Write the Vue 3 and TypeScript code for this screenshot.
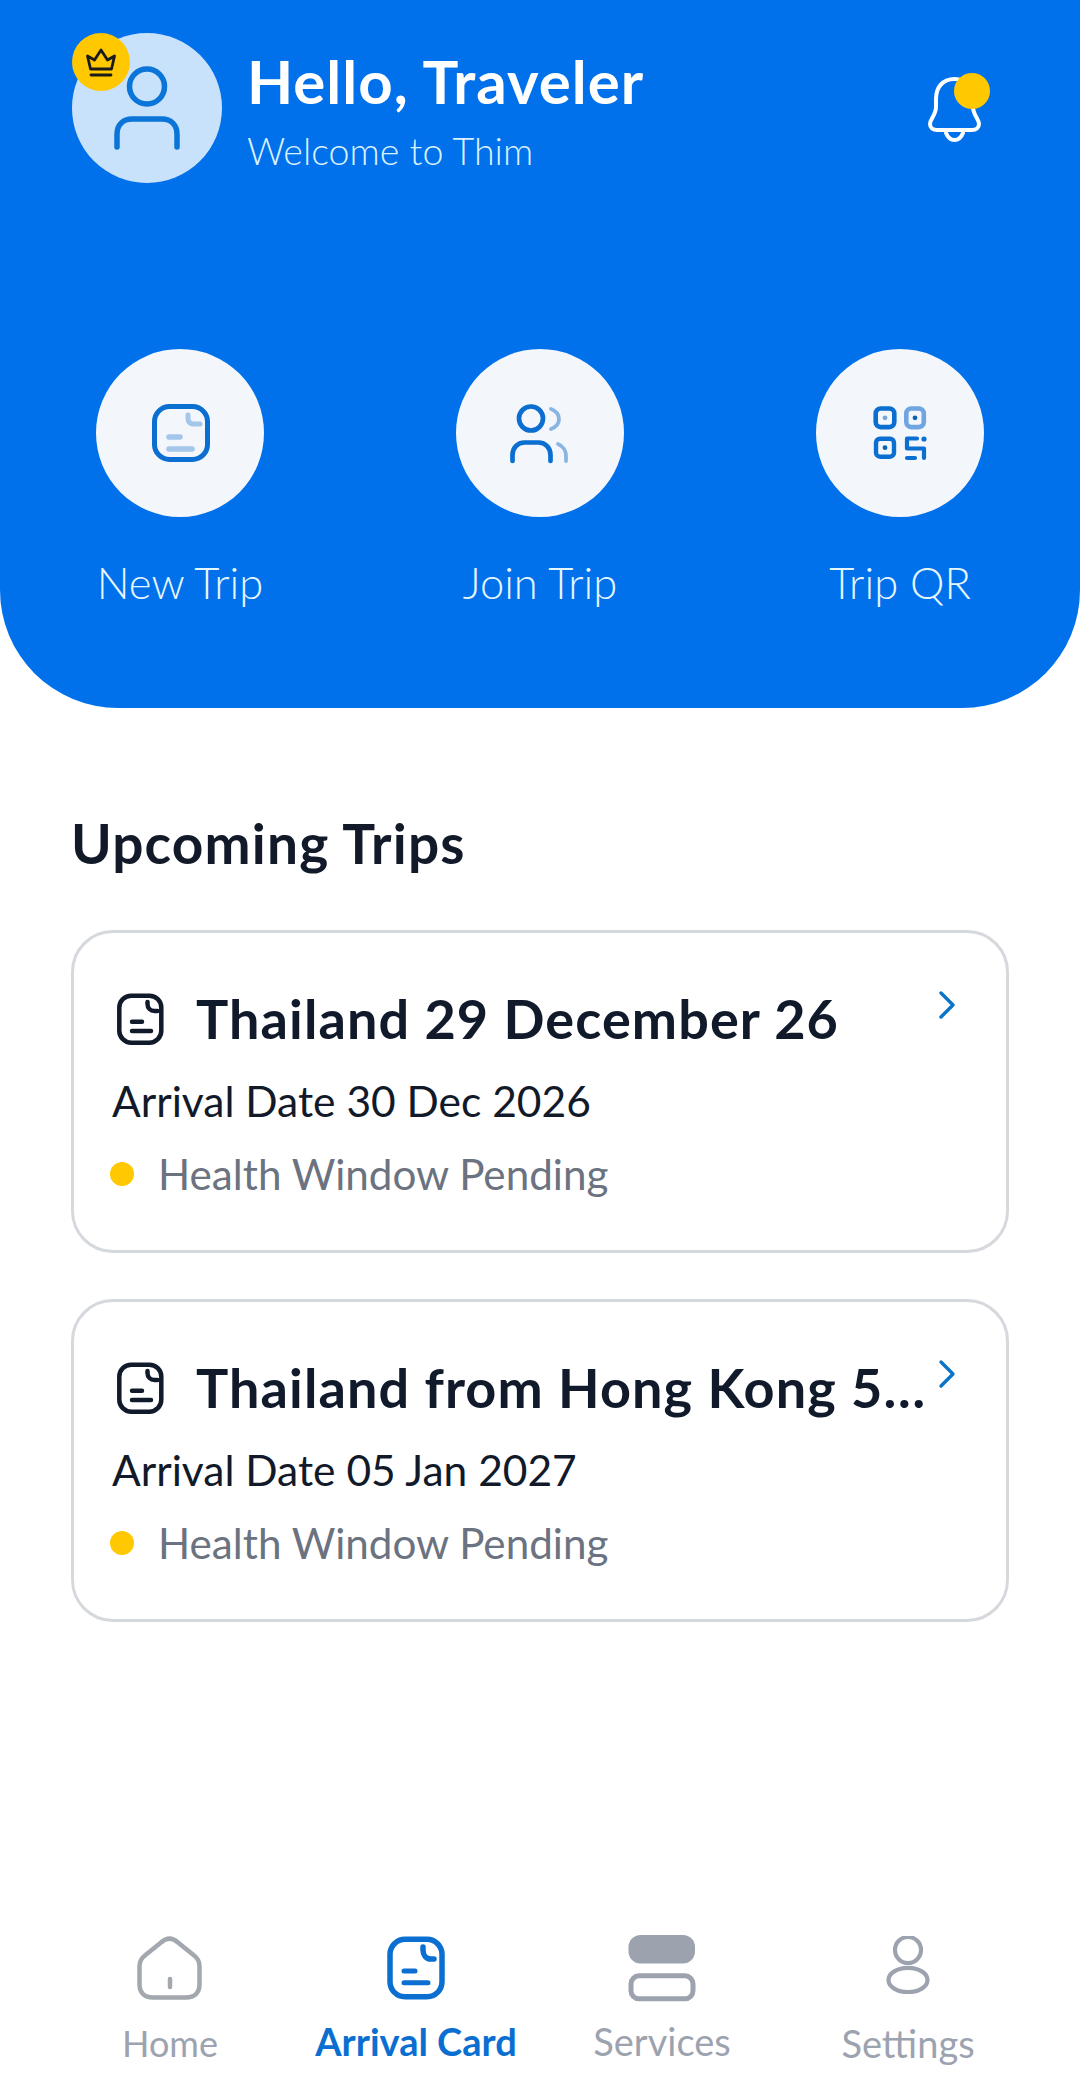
<script setup lang="ts">
interface Trip {
  title: string;
  arrival: string;
}

const actions = ["New Trip", "Join Trip", "Trip QR"];

const trips: Trip[] = [
  { title: "Thailand 29 December 26", arrival: "Arrival Date 30 Dec 2026" },
  { title: "Thailand from Hong Kong 5 January 27", arrival: "Arrival Date 05 Jan 2027" },
];
</script>

<template>
  <div class="page">
    <header class="hero">
      <div class="top">
        <div class="avatar">
          <svg width="66" height="84" viewBox="0 0 66 84" fill="none" stroke="#0a74d8" stroke-width="5.5" stroke-linecap="round">
            <circle cx="33" cy="20.5" r="17.5" />
            <path d="M3 81V68c0-9 6-15 15-15h30c9 0 15 6 15 15v13" />
          </svg>
          <span class="crown">
            <svg width="34" height="34" viewBox="0 0 34 34" fill="none" stroke="#1b1b1b" stroke-width="2.8" stroke-linejoin="round" stroke-linecap="round">
              <path d="M6.5 24 3.5 11l7 4L17 5l6.5 10 7-4-3 13z" />
              <path d="M7 30h20" />
            </svg>
          </span>
        </div>
        <div class="hello">
          <h1>Hello, Traveler</h1>
          <p>Welcome to Thim</p>
        </div>
        <div class="bell">
          <svg width="53" height="65" viewBox="0 0 53 65" fill="none" stroke="#fff" stroke-width="4" stroke-linecap="round" stroke-linejoin="round">
            <path d="M26.5 2C14 2 8 11 8 22v8c0 8-6 12-6 17 0 4 3 6 7 6h35c4 0 7-2 7-6 0-5-6-9-6-17v-8C45 11 39 2 26.5 2z" />
            <path d="M18 56c2 5 5 7 8.5 7s6.5-2 8.5-7" />
          </svg>
          <span class="bell-dot"></span>
        </div>
      </div>

      <div class="actions">
        <div v-for="(a, i) in actions" :key="a" class="action">
          <div class="action-circle">
            <svg v-if="i === 0" width="60" height="58" viewBox="-2 0 60 58" fill="none" stroke-linecap="round" stroke-width="5">
              <rect x="2.5" y="2.5" width="53" height="53" rx="15" stroke="#0a6fd0" />
              <path d="M36 11v3c0 4 2 6 6 6h6" stroke="#a3c6ea" />
              <path d="M17 33h11M17 45h23" stroke="#a3c6ea" stroke-width="5.5" />
            </svg>
            <svg v-else-if="i === 1" width="64" height="64" viewBox="0 0 64 64" fill="none" stroke-linecap="round" stroke-width="4.7">
              <circle cx="23" cy="17.5" r="12" stroke="#0a6fd0" />
              <path d="M4.5 60v-6c0-7 5-12.5 12-12.5h14c7 0 12 5.5 12 12.5v6" stroke="#0a6fd0" />
              <path d="M43 8c5 2 8 6 8 10s-3 8-8 10" stroke="#8ab5e3" stroke-width="3.8" />
              <path d="M50 43c5 2 8 7 8 12v5" stroke="#8ab5e3" stroke-width="3.8" />
            </svg>
            <svg v-else width="58" height="58" viewBox="0 0 58 58" fill="none" stroke-linecap="round" stroke-linejoin="round" stroke-width="4.6">
              <rect x="4.7" y="4.5" width="18.6" height="18.6" rx="5" stroke="#0a6fd0" />
              <circle cx="14" cy="13.8" r="2.4" fill="#7aa6d5" />
              <rect x="35.3" y="4.5" width="17.5" height="18.6" rx="5" stroke="#6fa5e0" />
              <circle cx="44" cy="13.8" r="2.4" fill="#0a62b0" />
              <rect x="5" y="34.7" width="18" height="18" rx="4" stroke="#0a6fd0" stroke-width="4.4" />
              <circle cx="14" cy="43.7" r="2.4" fill="#0a62b0" />
              <path d="M46 34.5H36v10h17V54M36 54h8" stroke="#0a6fd0" stroke-width="4.2" />
              <circle cx="53" cy="35" r="2.6" fill="#0a6fd0" />
            </svg>
          </div>
          <span class="action-label">{{ a }}</span>
        </div>
      </div>
    </header>

    <main class="content">
      <h2>Upcoming Trips</h2>
      <article v-for="t in trips" :key="t.title" class="card">
        <div class="card-head">
          <svg class="doc" width="48" height="52" viewBox="0 0 48 52" fill="none" stroke="#101a2b" stroke-width="4.5" stroke-linecap="round">
            <rect x="3.3" y="2.7" width="42" height="47" rx="12" />
            <path d="M31.5 9v2c0 4 3 7 7 7h3" />
            <path d="M16 28.7h10M16 38h19" />
          </svg>
          <h3>{{ t.title }}</h3>
          <svg class="chev" width="20" height="30" viewBox="0 0 20 30" fill="none" stroke="#0a74c8" stroke-width="3.4" stroke-linecap="round" stroke-linejoin="round">
            <path d="M4 3l12 12L4 27" />
          </svg>
        </div>
        <p class="arrival">{{ t.arrival }}</p>
        <p class="status"><span class="dot"></span>Health Window Pending</p>
      </article>
    </main>

    <nav class="tabs">
      <div class="tab">
        <div class="tab-icon">
          <svg width="66" height="64" viewBox="0 0 66 64" fill="none" stroke="#a3a7ae" stroke-width="4.5" stroke-linecap="round" stroke-linejoin="round">
            <path d="M2.5 30c0-5 2-8 6-11L24 6.5c5.5-5 11.5-5 17 0L56.5 19c4 3 6 6 6 11v18c0 9-5 13.5-13.500 13.5H16C7.5 61.5 2.5 57 2.5 48z" />
            <path d="M33 43v8" />
          </svg>
        </div>
        <span>Home</span>
      </div>
      <div class="tab active">
        <div class="tab-icon">
          <svg width="58" height="64" viewBox="0 0 58 64" fill="none" stroke="#0a6fd0" stroke-width="5.5" stroke-linecap="round">
            <rect x="3" y="3.3" width="52" height="57.5" rx="15" />
            <path d="M36 11v3c0 5 3 9 8 9h3" />
            <path d="M17 35h11M17 46.7h24" stroke-width="5" />
          </svg>
        </div>
        <span>Arrival Card</span>
      </div>
      <div class="tab up">
        <div class="tab-icon">
          <svg class="stack" width="68" height="67" viewBox="0 0 68 67" fill="none">
            <rect x="0.5" y="0" width="66.5" height="28.5" rx="12" fill="#9ca3af" />
            <rect x="3" y="40.8" width="62" height="23" rx="8" stroke="#9ca3af" stroke-width="5" />
          </svg>
        </div>
        <span>Services</span>
      </div>
      <div class="tab">
        <div class="tab-icon">
          <svg width="44" height="58" viewBox="0 0 44 58" fill="none" stroke="#9ca3af" stroke-width="4.2">
            <circle cx="22" cy="14" r="13" />
            <ellipse cx="22" cy="44" rx="19.5" ry="12.2" />
          </svg>
        </div>
        <span>Settings</span>
      </div>
    </nav>
  </div>
</template>

<style scoped>
.page {
  width: 1080px;
  height: 2099px;
  display: flex;
  flex-direction: column;
  background: #fff;
  font-family: Lato, "Open Sans", sans-serif;
  overflow: hidden;
}

.hero {
  height: 708px;
  flex: none;
  box-sizing: border-box;
  background: #0070eb;
  border-radius: 0 0 118px 118px;
  padding: 33px 72px 0;
  display: flex;
  flex-direction: column;
}

.top {
  display: flex;
  align-items: center;
  gap: 25px;
}

.avatar {
  position: relative;
  width: 150px;
  height: 150px;
  flex: none;
  border-radius: 50%;
  background: #c9e2fb;
  display: flex;
  align-items: center;
  justify-content: center;
}

.crown {
  position: absolute;
  left: 0;
  top: 0;
  width: 58px;
  height: 58px;
  border-radius: 50%;
  background: #ffc800;
  display: flex;
  align-items: center;
  justify-content: center;
}

.hello {
  padding-top: 3px;
}

.hello h1 {
  margin: 0;
  color: #fff;
  font-size: 60px;
  line-height: 68px;
  font-weight: 700;
  letter-spacing: 1px;
}

.hello p {
  margin: 14px 0 0;
  color: #d9f2ff;
  font-size: 37.6px;
  line-height: 44px;
  font-weight: 300;
}

.bell {
  position: relative;
  margin: 3px 27px 0 auto;
  width: 53px;
  height: 65px;
}

.bell-dot {
  position: absolute;
  left: 26px;
  top: -4px;
  width: 36px;
  height: 36px;
  border-radius: 50%;
  background: #ffc800;
}

.actions {
  margin: 166px 24px 0;
  display: grid;
  grid-template-columns: 168px 168px 168px;
  justify-content: space-between;
}

.action {
  display: flex;
  flex-direction: column;
  align-items: center;
}

.action-circle {
  width: 168px;
  height: 168px;
  border-radius: 50%;
  background: #f3f7fb;
  display: flex;
  align-items: center;
  justify-content: center;
}

.action-label {
  margin-top: 40px;
  color: #e6f6ff;
  font-size: 43.5px;
  line-height: 50px;
  font-weight: 300;
  white-space: nowrap;
}

.content {
  padding: 104px 71px 0;
}

.content h2 {
  margin: 0 0 56px;
  color: #121a2a;
  font-size: 55px;
  line-height: 62px;
  font-weight: 700;
  letter-spacing: 1.2px;
}

.card {
  box-sizing: border-box;
  height: 323px;
  margin-bottom: 46px;
  padding: 55px 49px 0 38px;
  border: 3px solid #d5d8dc;
  border-radius: 42px;
  background: #fff;
}

.card-head {
  display: flex;
  align-items: center;
  height: 68px;
  margin-top: -3px;
}

.doc {
  flex: none;
  margin-left: 4px;
}

.card-head h3 {
  flex: 1;
  min-width: 0;
  margin: 0 0 0 32px;
  color: #111a2b;
  font-size: 54px;
  line-height: 68px;
  font-weight: 700;
  letter-spacing: 1.1px;
  white-space: nowrap;
  overflow: hidden;
  text-overflow: ellipsis;
}

.chev {
  flex: none;
  margin: -29px 0 0 10px;
}

.arrival {
  margin: 23px 0 0;
  color: #121a2a;
  font-size: 42.5px;
  line-height: 50px;
  font-weight: 400;
}

.status {
  margin: 23px 0 0 -2px;
  display: flex;
  align-items: center;
  color: #6b7280;
  font-size: 42.2px;
  line-height: 50px;
  font-weight: 400;
}

.dot {
  flex: none;
  width: 24px;
  height: 24px;
  margin-right: 24px;
  border-radius: 50%;
  background: #ffc800;
}

.tabs {
  margin-top: auto;
  padding: 0 47px 34px;
  display: grid;
  grid-template-columns: repeat(4, 246px);
}

.tab {
  display: flex;
  flex-direction: column;
  align-items: center;
  gap: 21px;
  color: #9ca3af;
  font-size: 38px;
  line-height: 44px;
}

.tab:first-child span {
  font-size: 36px;
}

.tab-icon {
  height: 64px;
  display: flex;
  justify-content: center;
  align-items: flex-start;
}

.stack {
  margin-top: -1px;
}

.tab span {
  white-space: nowrap;
}

.tab.up span,
.tab.active span {
  margin-top: -2px;
}

.tab.active {
  color: #0a6fd0;
  font-weight: 700;
}
</style>
